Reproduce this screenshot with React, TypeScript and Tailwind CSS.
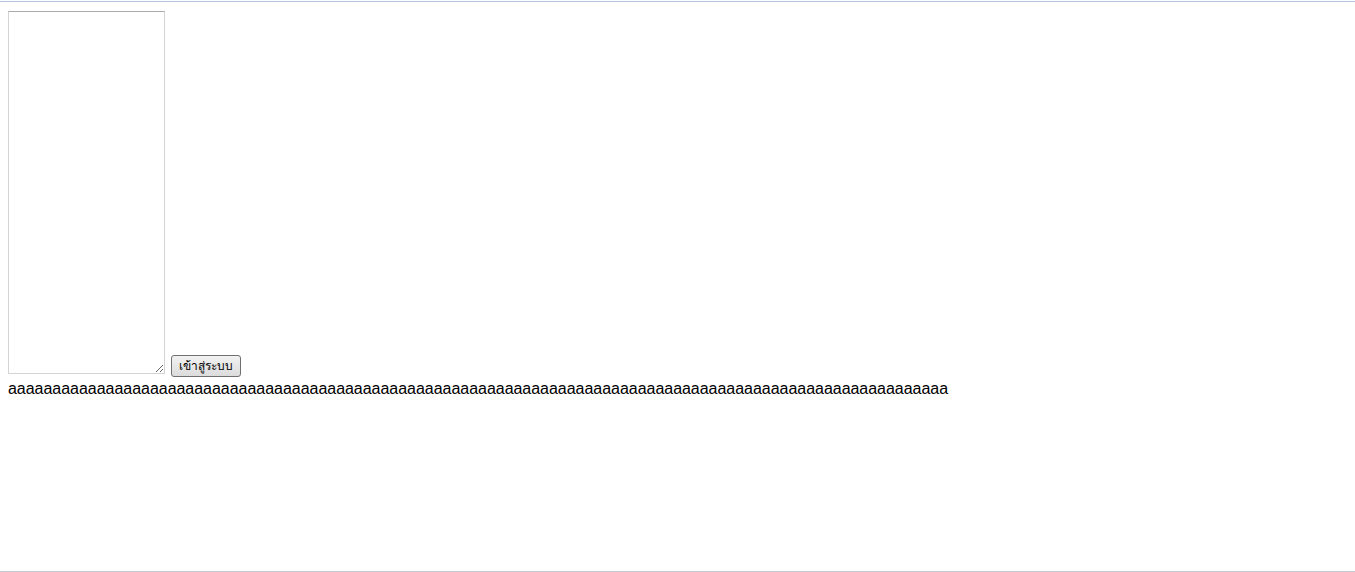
export default function App() {
  const text = 'a'.repeat(106)

  return (
    <div className="flex h-[572px] w-full flex-col bg-white font-['Liberation_Sans',sans-serif]">
      <div className="mt-px h-px w-full bg-[#b4c6de]" />
      <div className="flex-1 px-2 pt-[9px]">
        <div className="flex items-end gap-[6px]">
          <textarea
            className="h-[363px] w-[157px] resize border border-[#d4d4d4] border-t-[#ababab] bg-white outline-none"
            defaultValue=""
          />
          <button
            type="button"
            className="mb-[-3px] h-[22px] w-[70px] rounded-[3px] border border-[#707070] bg-gradient-to-b from-[#f2f2f2] to-[#dcdcdc] text-[12px] font-medium leading-none text-black font-['Tahoma','DejaVu_Sans',sans-serif]"
          >
            เข้าสู่ระบบ
          </button>
        </div>
        <div className="mt-[5px] text-[16px] leading-[19px] tracking-[-0.03px] text-black">{text}</div>
      </div>
      <div className="h-px w-full bg-[#c5cbd2]" />
    </div>
  )
}
